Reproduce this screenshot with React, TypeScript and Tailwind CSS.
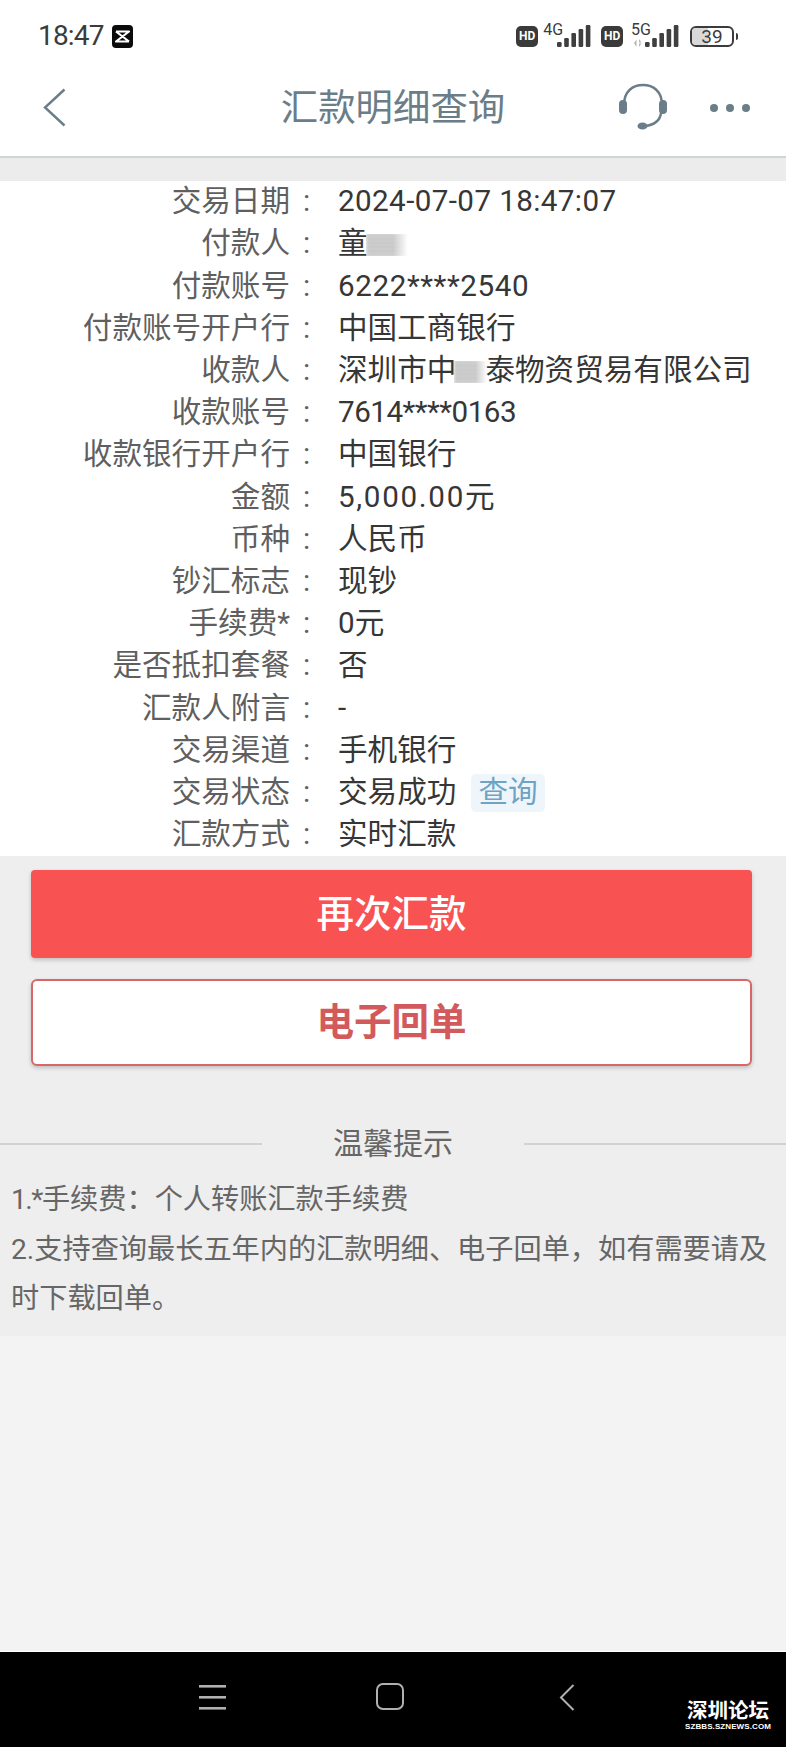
/**
 * 汇款明细查询 — mobile bank transfer detail page
 */

import { clsx } from 'clsx';

const ROWS: { label: string; value: React.ReactNode }[] = [
  { label: '交易日期', value: <span className="tracking-[0.4px]">2024-07-07 18:47:07</span> },
  { label: '付款人', value: <>童<Smudge className="w-[38px]" /></> },
  { label: '付款账号', value: <span className="tracking-[0.6px]">6222****2540</span> },
  { label: '付款账号开户行', value: '中国工商银行' },
  { label: '收款人', value: <>深圳市中<Smudge className="w-[29px]" />泰物资贸易有限公司</> },
  { label: '收款账号', value: <span className="tracking-[-0.5px]">7614****0163</span> },
  { label: '收款银行开户行', value: '中国银行' },
  { label: '金额', value: <><span className="tracking-[1.7px]">5,000.00</span>元</> },
  { label: '币种', value: '人民币' },
  { label: '钞汇标志', value: '现钞' },
  { label: '手续费*', value: '0元' },
  { label: '是否抵扣套餐', value: '否' },
  { label: '汇款人附言', value: '-' },
  { label: '交易渠道', value: '手机银行' },
  {
    label: '交易状态',
    value: (
      <span className="flex items-center">
        交易成功
        <span className="ml-[15px] rounded-[5px] bg-[#eff6fb] px-[7px] h-[38px] flex items-center text-[#6ea3c4]">查询</span>
      </span>
    ),
  },
  { label: '汇款方式', value: '实时汇款' },
];

function Smudge({ className }: { className?: string }) {
  return (
    <span className={clsx('inline-block h-[22px] align-[-3px] relative', className)}>
      <span className="absolute inset-y-0 left-[-2px] right-[-2px] blur-[1.5px] bg-[repeating-linear-gradient(180deg,#aaaaaa_0px,#aaaaaa_2px,#ececec_2px,#ececec_4px)] [mask-image:linear-gradient(90deg,#000_0%,#000_65%,transparent_100%)]" />
    </span>
  );
}

function HdBadge() {
  return (
    <span className="flex h-[21px] w-[22px] items-center justify-center rounded-[5px] bg-[#3a3a3a] font-['Roboto',sans-serif] text-[12px] font-bold text-white">
      HD
    </span>
  );
}

function Signal() {
  return (
    <svg width="34" height="22" viewBox="0 0 34 22" fill="#3f3f3f">
      <rect x="0" y="17" width="4.6" height="5" rx="1.2" />
      <rect x="7.2" y="13" width="4.6" height="9" rx="1.2" />
      <rect x="14.4" y="8" width="4.6" height="14" rx="1.2" />
      <rect x="21.6" y="4" width="4.6" height="18" rx="1.2" />
      <rect x="28.8" y="0" width="4.6" height="22" rx="1.2" />
    </svg>
  );
}

function StatusBar() {
  return (
    <div className="flex h-[66px] items-center justify-between pl-[38px] pr-[48px] pt-[6px] text-[#3b3b3b]">
      <div className="flex items-center gap-[8px]">
        <span className="text-[28px] leading-none tracking-[-0.8px]">18:47</span>
        <svg width="21" height="23" viewBox="0 0 21 23">
          <rect width="21" height="23" rx="4" fill="#0b0b0b" />
          <path d="M4 6.5h13L4 16.5h13M4 6.5l13 10M17 6.5L4 16.5" stroke="#fff" strokeWidth="2.2" fill="none" strokeLinejoin="round" />
        </svg>
      </div>
      <div className="flex items-center">
        <HdBadge />
        <span className="ml-[5px] mb-[12px] text-[16px] leading-none">4G</span>
        <span className="-ml-[6px]"><Signal /></span>
        <span className="ml-[10px]"><HdBadge /></span>
        <span className="relative ml-[8px] mb-[12px] text-[16px] leading-none">5G</span>
        <svg className="-ml-[17px] mt-[14px]" width="10" height="8" viewBox="0 0 10 8" fill="#b5b5b5">
          <path d="M0 4l2.5-3.5V8zM5 0l2.5 3.5H5zM5 4.5h2.5L5 8z" />
        </svg>
        <span className="ml-[1px]"><Signal /></span>
        <span className="relative ml-[11px] flex h-[21px] w-[44px] items-center justify-center overflow-hidden rounded-[6px] border-[2px] border-[#3b3b3b]">
          <span className="absolute inset-y-0 left-0 w-[39%] bg-[#d9d9d9]" />
          <span className="relative text-[19px] leading-none">39</span>
        </span>
        <span className="ml-[2px] h-[7px] w-[2px] rounded-r-sm bg-[#3b3b3b]" />
      </div>
    </div>
  );
}

function Header() {
  return (
    <div className="grid h-[92px] grid-cols-[1fr_auto_1fr] items-center border-b-[2px] border-[#cfd6d8] pb-[8px] text-[#6a7d88]">
      <div className="pl-[43px]">
        <svg width="23" height="39" viewBox="0 0 23 39" fill="none" stroke="currentColor" strokeWidth="2.4">
          <path d="M21.5 1.5L2 19.5 21.5 37.5" />
        </svg>
      </div>
      <div className="mt-[3px] text-[37.4px] leading-none">汇款明细查询</div>
      <div className="flex items-center justify-end pr-[36px]">
        <svg width="50" height="47" viewBox="20 14 50 47" className="mt-[-2px]" fill="currentColor">
          <path d="M25 36C25 22 34 16 44 16s19 6 19 20" fill="none" stroke="currentColor" strokeWidth="2.4" />
          <rect x="20" y="31" width="8" height="14" rx="4" />
          <rect x="60" y="31" width="8" height="14" rx="4" />
          <path d="M62 44c-1 8-8 12-16 13" fill="none" stroke="currentColor" strokeWidth="2.4" />
          <ellipse cx="43.5" cy="57" rx="5" ry="3.6" />
        </svg>
        <div className="ml-[41px] mt-[2px] flex gap-[8px]">
          <span className="size-[8px] rounded-full bg-current" />
          <span className="size-[8px] rounded-full bg-current" />
          <span className="size-[8px] rounded-full bg-current" />
        </div>
      </div>
    </div>
  );
}

function DetailRow({ label, value }: { label: string; value: React.ReactNode }) {
  return (
    <div className="grid h-[42.2px] grid-cols-[290px_48px_1fr] items-center whitespace-nowrap">
      <span className="text-right text-[#5f5f5f]">{label}</span>
      <span className="pl-[13px] text-[#5f5f5f]">:</span>
      <span className="text-[#363636]">{value}</span>
    </div>
  );
}

export default function App() {
  return (
    <div className="flex min-h-[1747px] w-[786px] flex-col bg-[#f3f3f3] font-['Roboto','Noto_Sans_CJK_SC',sans-serif]">
      <div className="bg-white">
        <StatusBar />
        <Header />
      </div>
      <div className="h-[23px] bg-[#ececec]" />

      <div className="bg-white text-[29.6px] leading-none">
        {ROWS.map((row) => (
          <DetailRow key={row.label} label={row.label} value={row.value} />
        ))}
      </div>

      <div className="h-[480px] bg-[#eeeeee]">
        <div className="flex flex-col gap-[21px] pl-[31px] pr-[34px] pt-[14px]">
          <button className="flex h-[88px] items-center justify-center rounded-[4px] bg-[#f95252] text-[37.5px] font-medium text-white shadow-[0_2px_4px_rgba(0,0,0,0.2)]">
            再次汇款
          </button>
          <button className="flex h-[87px] items-center justify-center rounded-[6px] border-[2px] border-[#d66868] bg-white text-[37.5px] font-bold text-[#d25a5c] shadow-[0_2px_4px_rgba(0,0,0,0.2)]">
            电子回单
          </button>
        </div>

        <div className="mt-[63px] flex items-center">
          <span className="h-[2px] flex-1 bg-[#d2d2d2]" />
          <span className="w-[262px] text-center text-[30px] leading-none text-[#666666]">温馨提示</span>
          <span className="h-[2px] flex-1 bg-[#d2d2d2]" />
        </div>

        <div className="mt-[16px] px-[11px] text-[28.2px] leading-[49.5px] text-[#666666]">
          <p><span className="tracking-[-1.5px]">1.*</span>手续费：个人转账汇款手续费</p>
          <p>2.支持查询最长五年内的汇款明细、电子回单，如有需要请及时下载回单。</p>
        </div>
      </div>

      <div className="flex-1" />

      <div className="relative flex h-[96px] items-start border-t border-white bg-black text-[#b0b0b0]">
        <svg className="ml-[198px] mt-[32px]" width="29" height="26" viewBox="0 0 29 26" fill="currentColor">
          <rect x="1" y="1" width="27" height="2.6" />
          <rect x="1" y="12" width="27" height="2.6" />
          <rect x="1" y="23" width="27" height="2.6" />
        </svg>
        <span className="ml-[149px] mt-[31px] h-[27px] w-[28px] rounded-[7px] border-[2px] border-current" />
        <svg className="ml-[155px] mt-[32px]" width="16" height="27" viewBox="0 0 16 27" fill="none" stroke="currentColor" strokeWidth="2">
          <path d="M14.5 1L2 13.5 14.5 26" />
        </svg>
        <div className="absolute right-[15px] top-[49px] flex flex-col items-center text-white">
          <span className="text-[20.5px] font-bold leading-[21px]">深圳论坛</span>
          <span className="font-['Liberation_Sans',sans-serif] text-[8px] font-bold leading-[9px] tracking-[0.1px]">SZBBS.SZNEWS.COM</span>
        </div>
      </div>
    </div>
  );
}
